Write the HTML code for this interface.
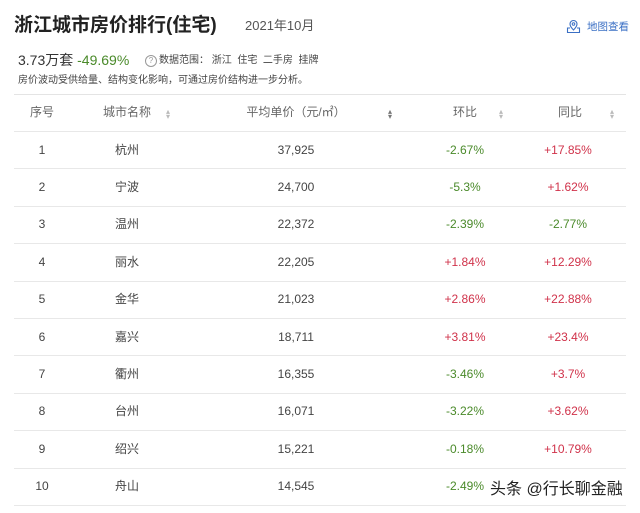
<!DOCTYPE html>
<html><head><meta charset="utf-8"><style>
body{margin:0;width:640px;height:513px;background:#fff;font-family:"Liberation Sans","Noto Sans CJK SC",sans-serif;position:relative;overflow:hidden;color:#333}
.a{position:absolute;white-space:nowrap}
.c{position:absolute;transform:translateX(-50%);white-space:nowrap;font-size:12px;color:#444;height:37px;line-height:37px}
.line{position:absolute;left:14px;width:612px;height:1px;background:#e8e8e8}
.g{color:#4a8a2a}.r{color:#d0324a}
.s{position:absolute;font-size:8px;color:#bbb;line-height:5px}
</style></head><body>
<div class="a" style="left:14px;top:12px;font-size:19px;line-height:28px;font-weight:bold;color:#222">浙江城市房价排行(住宅)</div>
<div class="a" style="left:245px;top:16px;font-size:13px;line-height:20px;color:#555">2021年10月</div>
<svg class="a" style="left:566px;top:19px" width="15" height="15" viewBox="0 0 15 15"><path d="M7.5 1.5a3.5 3.5 0 0 1 3.5 3.5c0 2.5-3.5 6-3.5 6s-3.5-3.5-3.5-6a3.5 3.5 0 0 1 3.5-3.5z" fill="none" stroke="#3a6fc4" stroke-width="1.1"/><circle cx="7.5" cy="5" r="1.3" fill="none" stroke="#3a6fc4"/><path d="M4 9H1.5v4.5h12V9H11" fill="none" stroke="#3a6fc4" stroke-width="1.1"/></svg>
<div class="a" style="left:587px;top:19px;font-size:10.5px;line-height:16px;color:#3a6fc4">地图查看</div>
<div class="a" style="left:18px;top:50px;font-size:14px;line-height:20px;color:#333">3.73万套 <span class="g">-49.69%</span></div>
<div class="a" style="left:145px;top:55px;width:10px;height:10px;border:1px solid #999;border-radius:50%;font-size:8px;line-height:10px;text-align:center;color:#999">?</div>
<div class="a" style="left:159px;top:53px;font-size:10px;line-height:15px;color:#444">数据范围： 浙江 &nbsp;住宅 &nbsp;二手房 &nbsp;挂牌</div>
<div class="a" style="left:18px;top:73px;font-size:10px;line-height:15px;color:#444">房价波动受供给量、结构变化影响，可通过房价结构进一步分析。</div>
<div class="line" style="top:94px;background:#e4e4e4"></div>
<div class="c" style="left:42px;top:94px;color:#666">序号</div>
<div class="c" style="left:127px;top:94px;color:#666">城市名称</div>
<div class="s" style="left:166px;top:109px">▴<br>▾</div>
<div class="c" style="left:296px;top:94px;color:#666">平均单价（元/㎡）</div>
<div class="s" style="left:388px;top:109px;color:#777">▴<br>▾</div>
<div class="c" style="left:465px;top:94px;color:#666">环比</div>
<div class="s" style="left:499px;top:109px">▴<br>▾</div>
<div class="c" style="left:570px;top:94px;color:#666">同比</div>
<div class="s" style="left:610px;top:109px">▴<br>▾</div>
<div id="rows"></div>
<script>
var d=[["1","杭州","37,925","-2.67%","+17.85%"],["2","宁波","24,700","-5.3%","+1.62%"],["3","温州","22,372","-2.39%","-2.77%"],["4","丽水","22,205","+1.84%","+12.29%"],["5","金华","21,023","+2.86%","+22.88%"],["6","嘉兴","18,711","+3.81%","+23.4%"],["7","衢州","16,355","-3.46%","+3.7%"],["8","台州","16,071","-3.22%","+3.62%"],["9","绍兴","15,221","-0.18%","+10.79%"],["10","舟山","14,545","-2.49%",""]];
var h="";d.forEach(function(r,i){var y=131+i*37.4;h+='<div class="line" style="top:'+y+'px"></div>';var t=y+0.5;
h+='<div class="c" style="left:42px;top:'+t+'px">'+r[0]+'</div><div class="c" style="left:127px;top:'+t+'px">'+r[1]+'</div><div class="c" style="left:296px;top:'+t+'px">'+r[2]+'</div>';
h+='<div class="c '+(r[3][0]=="-"?"g":"r")+'" style="left:465px;top:'+t+'px">'+r[3]+'</div>';
if(r[4])h+='<div class="c '+(r[4][0]=="-"?"g":"r")+'" style="left:568px;top:'+t+'px">'+r[4]+'</div>';});
h+='<div class="line" style="top:505px"></div>';
document.getElementById("rows").innerHTML=h;
</script>
<div class="a" style="left:490px;top:479px;font-size:16px;line-height:22px;color:#222;background:rgba(255,255,255,0.6)">头条 @行长聊金融</div>
</body></html>
